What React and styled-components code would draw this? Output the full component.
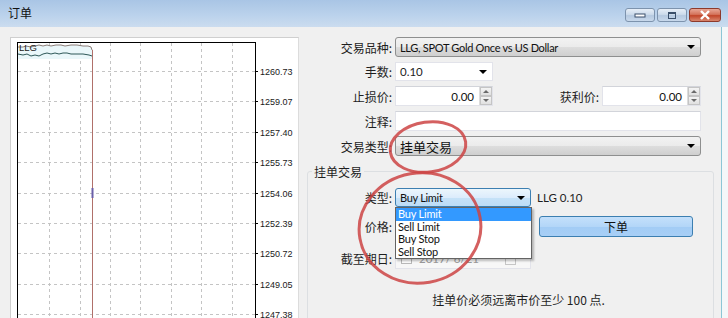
import React from "react";
import styled, { createGlobalStyle } from "styled-components";

// --------------------------------------------------

const GlobalStyle = createGlobalStyle`
	html, body {
		margin: 0;
		padding: 0;
		background: #f0f0f0;
	}
	body {
		font-family: Lato, "Noto Sans CJK SC", sans-serif;
		font-size: 12px;
		color: #1e1e1e;
	}
`;

const cjk = `"Noto Sans CJK SC", "Noto Sans", sans-serif`;
const latin = `Lato, "Noto Sans CJK SC", sans-serif`;

// --------------------------------------------------

const Window = styled.div`
	position: relative;
	width: 728px;
	height: 318px;
	overflow: hidden;
	background: #f4f7f9;
	display: flex;
	flex-direction: column;
`;

const TitleBar = styled.div`
	height: 27px;
	flex: none;
	display: flex;
	align-items: flex-start;
	padding: 0 8px;
	background: linear-gradient(#a9c5e5 0%, #bcd3ec 60%, #cbdcef 100%);
`;

const Title = styled.div`
	font-family: ${cjk};
	font-size: 12px;
	line-height: 26px;
	color: #111;
	flex: 1;
`;

const TitleButtons = styled.div`
	display: flex;
	gap: 2px;
	margin-top: 8px;
	margin-right: -1px;
`;

const CaptionButton = styled.div`
	width: ${({ $w }) => $w}px;
	height: 14px;
	border: 1px solid ${({ $close }) => ($close ? "#8d3a2c" : "#7d93ad")};
	border-radius: 3px;
	box-sizing: border-box;
	display: flex;
	align-items: center;
	justify-content: center;
	background: ${({ $close }) =>
		$close
			? "linear-gradient(#e8a797 0%, #d4735c 45%, #c2452a 55%, #d8866e 100%)"
			: "linear-gradient(#e6eef7 0%, #ccdbeb 45%, #b5c9e0 55%, #c8d9ec 100%)"};
`;

const Body = styled.div`
	flex: 1;
	display: flex;
	padding: 10px 0 0 10px;
	background: #f0f0f0;
	border-right: 1px solid #8cc6d6;
	margin-right: 6px;
`;

// --------------------------------------------------

const ChartPanel = styled.div`
	width: 287px;
	flex: none;
	background: #fff;
	border-left: 1px solid #cfcfcf;
	border-top: 1px solid #cfcfcf;
	border-right: 1px solid #dcdcdc;
	overflow: hidden;
`;

const Scale = styled.text`
	font-family: "Liberation Sans", Arial, sans-serif;
	font-size: 9px;
	fill: #1a1a1a;
`;

const levels = ["1260.73", "1259.07", "1257.40", "1255.73", "1254.06", "1252.39", "1250.72", "1249.05", "1247.38"];
const gridX = [48, 79, 109, 139, 170, 200, 231];

const Chart = () =>
	<svg width="287" height="290" viewBox="10 37 287 290">
		<rect x="16.5" y="41.5" width="238" height="300" fill="#fff" stroke="#000" />
		{gridX.map(x =>
			<line key={x} x1={x + 0.5} y1="42" x2={x + 0.5} y2="330" stroke="#c4c4c4" strokeDasharray="3 3" />
		)}
		{levels.map((l, i) => {
			const y = Math.round(70 + i * 30.4) + 0.5;
			return (
				<g key={l}>
					<line x1="17" y1={y} x2="254" y2={y} stroke="#c4c4c4" strokeDasharray="3 3" />
					<line x1="254" y1={y} x2="257" y2={y} stroke="#000" />
					<Scale x="259" y={y + 3}>{l}</Scale>
				</g>
			);
		})}
		<path
			d="M17,46 L22,46 L25,45 L30,46 L34,45 L38,44 L42,45 L46,44 L50,45 L55,44 L60,44 L64,45 L70,44 L76,44 L82,45 L87,45 Q91,45 91,49 L91,58 L17,58 Z"
			fill="#eaf7fa"
		/>
		<path
			d="M17,46 L22,46 L25,45 L30,46 L34,45 L38,44 L42,45 L46,44 L50,45 L55,44 L60,44 L64,45 L70,44 L76,44 L82,45 L87,45 Q91,45 91,49"
			fill="none" stroke="#8a7d78" strokeWidth="1"
		/>
		<path
			d="M17,53 L22,54 L26,53 L30,55 L34,54 L38,55 L42,53 L46,52 L50,53 L54,52 L58,53 L62,52 L66,52 L70,53 L76,53 L82,53 L88,54 L91,55"
			fill="none" stroke="#2e5858" strokeWidth="1"
		/>
		<line x1="91.5" y1="49" x2="91.5" y2="330" stroke="#b0706a" />
		<line x1="91.5" y1="187" x2="91.5" y2="197" stroke="#6a5fa8" strokeWidth="2" />
		<text x="18" y="50" fontFamily="Liberation Sans, Arial, sans-serif" fontSize="9.5" fill="#222">LLG</text>
	</svg>;

// --------------------------------------------------

const FormPanel = styled.div`
	width: 407px;
	margin-left: 8px;
	display: flex;
	flex-direction: column;
	gap: 5px;
`;

const Row = styled.div`
	display: flex;
	align-items: center;
	height: ${({ $h }) => $h || 20}px;
	margin-top: ${({ $mt }) => $mt || 0}px;
`;

const Label = styled.div`
	width: ${({ $w }) => $w || 88}px;
	flex: none;
	text-align: right;
	font-family: ${cjk};
	font-size: 12px;
	padding-right: 3px;
	box-sizing: border-box;
	color: #1e1e1e;
	white-space: nowrap;
`;

const Combo = styled.div`
	position: relative;
	width: ${({ $w }) => $w}px;
	height: 100%;
	box-sizing: border-box;
	border: 1px solid ${({ $focus }) => ($focus ? "#3c7fb1" : "#8e8f8f")};
	border-radius: 3px;
	display: flex;
	align-items: center;
	padding: 0 0 0 4px;
	background: ${({ $focus }) =>
		$focus
			? "linear-gradient(#ecf6fc 0%, #dcecfc 50%, #c6e2f8 51%, #bcdcf6 100%)"
			: "linear-gradient(#f2f2f2 0%, #ebebeb 50%, #dddddd 51%, #cfcfcf 100%)"};
	font-family: ${({ $cjk }) => ($cjk ? cjk : latin)};
	font-size: ${({ $big }) => ($big ? 13 : 11)}px;
	letter-spacing: ${({ $cjk }) => ($cjk ? 0 : -0.3)}px;
	color: #111;
`;

const ComboText = styled.span`
	flex: 1;
	white-space: nowrap;
`;

const Arrow = styled.span`
	width: 0;
	height: 0;
	border-left: 4px solid transparent;
	border-right: 4px solid transparent;
	border-top: 4px solid #000;
	margin-right: 5px;
`;

const EditCombo = styled.div`
	width: ${({ $w }) => $w}px;
	height: 100%;
	box-sizing: border-box;
	background: #fff;
	border: 1px solid #e2e3ea;
	display: flex;
	align-items: center;
	padding-left: 4px;
	font-family: ${latin};
	font-size: 11.5px;
`;

const TextBox = styled.div`
	width: ${({ $w }) => $w}px;
	height: 100%;
	box-sizing: border-box;
	background: ${({ $disabled }) => ($disabled ? "#f7f7f7" : "#fff")};
	border: 1px solid #e2e3ea;
	border-top-color: #d2d4da;
	display: flex;
	align-items: center;
	font-family: ${latin};
	font-size: 11.5px;
	color: ${({ $disabled }) => ($disabled ? "#9a9a9a" : "#111")};
`;

const SpinValue = styled.span`
	flex: 1;
	text-align: right;
	padding-right: 5px;
`;

const Spinner = styled.div`
	width: 13px;
	height: 100%;
	display: flex;
	flex-direction: column;
	border-left: 1px solid #dcdcdc;
	box-sizing: border-box;
`;

const SpinHalf = styled.div`
	flex: 1;
	display: flex;
	align-items: center;
	justify-content: center;
	background: linear-gradient(#f4f4f4, #e0e0e0);
	border: 1px solid #c5c5c5;
	&::after {
		content: "";
		border-left: 3px solid transparent;
		border-right: 3px solid transparent;
		${({ $up }) => ($up ? "border-bottom: 3px solid #6a6a6a;" : "border-top: 3px solid #6a6a6a;")}
	}
`;

const Spin = ({ w, value }) =>
	<TextBox $w={w}>
		<SpinValue>{value}</SpinValue>
		<Spinner>
			<SpinHalf $up />
			<SpinHalf />
		</Spinner>
	</TextBox>;

// --------------------------------------------------

const Group = styled.fieldset`
	margin: 2px 0 0 0;
	padding: 8px 0 0 0;
	border: 1px solid #dcdfe2;
	border-radius: 3px;
	display: flex;
	flex-direction: column;
	height: 160px;
	box-sizing: border-box;
	background: #f0f0f0;
`;

const Legend = styled.legend`
	font-family: ${cjk};
	font-size: 12px;
	padding: 0 2px;
	margin-left: 4px;
	color: #1e1e1e;
`;

const TypeWrap = styled.div`
	position: relative;
	height: 100%;
`;

const DropList = styled.div`
	position: absolute;
	left: 0;
	top: 19px;
	width: 137px;
	box-sizing: border-box;
	background: #fff;
	border: 1px solid #646464;
	box-shadow: 2px 2px 2px rgba(0, 0, 0, 0.25);
	z-index: 2;
`;

const DropItem = styled.div`
	height: 12.5px;
	line-height: 12.5px;
	padding-left: 2px;
	font-family: ${latin};
	font-size: 11px;
	letter-spacing: -0.2px;
	color: ${({ $sel }) => ($sel ? "#fff" : "#111")};
	background: ${({ $sel }) => ($sel ? "#3399ff" : "transparent")};
`;

const Side = styled.span`
	margin-left: 6px;
	font-family: ${latin};
	font-size: 11.5px;
`;

const OrderButton = styled.div`
	width: 154px;
	height: 100%;
	margin-left: 8px;
	box-sizing: border-box;
	border: 1px solid #3c7fb1;
	border-radius: 3px;
	background: linear-gradient(#c4e0fb 0%, #b3d6f8 50%, #a2ccf5 51%, #a8cff6 100%);
	display: flex;
	align-items: center;
	justify-content: center;
	font-family: ${cjk};
	font-size: 12px;
	color: #111;
`;

const CheckBox = styled.span`
	width: 9px;
	height: 9px;
	border: 1px solid #b8b8b8;
	background: #fbfbfb;
	margin: 0 7px 0 5px;
`;

const CalIcon = styled.span`
	width: 9px;
	height: 9px;
	border: 1px solid #b0b0b0;
	border-top-width: 3px;
	margin-left: auto;
	margin-right: 14px;
	opacity: 0.7;
`;

const Note = styled.div`
	margin-top: 22px;
	text-align: center;
	padding-left: 16px;
	font-family: ${cjk};
	font-size: 12px;
	color: #1e1e1e;
`;

const Marks = styled.svg`
	position: absolute;
	left: 0;
	top: 0;
	pointer-events: none;
	z-index: 5;
`;

// --------------------------------------------------

const App = () =>
	<>
		<GlobalStyle />
		<Window>
			<TitleBar>
				<Title>订单</Title>
				<TitleButtons>
					<CaptionButton $w={30}>
						<svg width="12" height="6"><rect x="1" y="2" width="10" height="3" fill="#fff" stroke="#3a4f6a" /></svg>
					</CaptionButton>
					<CaptionButton $w={30}>
						<svg width="10" height="9"><rect x="1.5" y="1.5" width="7" height="6" fill="none" stroke="#3a4f6a" strokeWidth="1" /><rect x="1" y="1" width="8" height="2" fill="#3a4f6a" /></svg>
					</CaptionButton>
					<CaptionButton $w={32} $close>
						<svg width="12" height="10"><path d="M2,1 L10,9 M10,1 L2,9" stroke="#fff" strokeWidth="2.4" /></svg>
					</CaptionButton>
				</TitleButtons>
			</TitleBar>

			<Body>
				<ChartPanel>
					<Chart />
				</ChartPanel>

				<FormPanel>
					<Row>
						<Label>交易品种:</Label>
						<Combo $w={306}>
							<ComboText>LLG, SPOT Gold Once vs US Dollar</ComboText>
							<Arrow />
						</Combo>
					</Row>
					<Row $h={19}>
						<Label>手数:</Label>
						<EditCombo $w={98}>
							<ComboText>0.10</ComboText>
							<Arrow />
						</EditCombo>
					</Row>
					<Row>
						<Label>止损价:</Label>
						<Spin w={98} value="0.00" />
						<Label $w={109}>获利价:</Label>
						<Spin w={99} value="0.00" />
					</Row>
					<Row>
						<Label>注释:</Label>
						<TextBox $w={306} />
					</Row>
					<Row>
						<Label>交易类型:</Label>
						<Combo $w={306} $cjk $big>
							<ComboText>挂单交易</ComboText>
							<Arrow />
						</Combo>
					</Row>

					<Group>
						<Legend>挂单交易</Legend>
						<Row $h={19}>
							<Label $w={87}>类型:</Label>
							<TypeWrap>
								<Combo $w={136} $focus>
									<ComboText>Buy Limit</ComboText>
									<Arrow />
								</Combo>
								<DropList>
									<DropItem $sel>Buy Limit</DropItem>
									<DropItem>Sell Limit</DropItem>
									<DropItem>Buy Stop</DropItem>
									<DropItem>Sell Stop</DropItem>
								</DropList>
							</TypeWrap>
							<Side>LLG 0.10</Side>
						</Row>
						<Row $h={21} $mt={9}>
							<Label $w={87}>价格:</Label>
							<TextBox $w={136} />
							<OrderButton>下单</OrderButton>
						</Row>
						<Row $h={21} $mt={11}>
							<Label $w={87}>截至期日:</Label>
							<TextBox $w={136} $disabled>
								<CheckBox />
								2017/ 6/21
								<CalIcon />
							</TextBox>
						</Row>
						<Note>挂单价必须远离市价至少 100 点.</Note>
					</Group>
				</FormPanel>
			</Body>

			<Marks width="728" height="318">
				<ellipse cx="428" cy="147" rx="38" ry="25" transform="rotate(-8 428 147)" fill="none" stroke="#cc4444" strokeWidth="3" opacity="0.85" />
				<ellipse cx="420" cy="228" rx="61" ry="55" transform="rotate(-10 420 228)" fill="none" stroke="#cc4444" strokeWidth="3" opacity="0.85" />
			</Marks>
		</Window>
	</>;

export default App;
